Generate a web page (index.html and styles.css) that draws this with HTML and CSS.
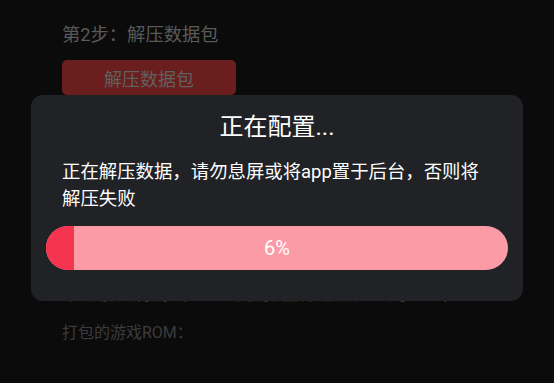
FILE: index.html
```html
<!DOCTYPE html>
<html lang="zh-CN">
  <head>
    <meta charset="UTF-8" />
    <meta name="viewport" content="width=device-width, initial-scale=1.0" />
    <title>打包</title>
    <link rel="stylesheet" href="styles.css">
  </head>
  <body>
    <main class="page">
      <p class="step">第2步：解压数据包</p>
      <button class="stepBtn">解压数据包</button>
      <p class="hint">本功能会将游戏ROM与模拟器打包成独立的APP，打包后可直接安装</p>
      <p class="label">打包的游戏ROM：</p>
    </main>

    <div class="dialog">
      <h1>正在配置...</h1>
      <p class="msg">正在解压数据，请勿息屏或将app置于后台，否则将解压失败</p>
      <div class="bar">
        <div class="fill" style="width: 6%"></div>
        <span class="percent">6%</span>
      </div>
    </div>
  </body>
</html>
```

FILE: styles.css
```css
* {
  margin: 0;
  padding: 0;
  box-sizing: border-box;
  font-family: Roboto, "Noto Sans CJK SC", sans-serif;
}

body {
  background-color: #0b0b0b;
  width: 554px;
  height: 383px;
  overflow: hidden;
  position: relative;
}

.page {
  padding: 22px 0 0 62px;
  display: flex;
  flex-direction: column;
  align-items: flex-start;
}

.step {
  font-size: 18.3px;
  line-height: 26px;
  color: #5a5a5a;
}

.stepBtn {
  margin-top: 12px;
  width: 174px;
  height: 35px;
  border: none;
  border-radius: 5px;
  background-color: #6a1e1d;
  color: #606060;
  font-size: 18px;
}

.hint {
  margin-top: 186px;
  width: 400px;
  white-space: nowrap;
  overflow: hidden;
  font-size: 18px;
  line-height: 26px;
  color: #3d3b26;
}

.label {
  margin-top: 14px;
  font-size: 16px;
  line-height: 24px;
  color: #3c3c3c;
}

.dialog {
  position: absolute;
  left: 31px;
  top: 95px;
  width: 492px;
  height: 206px;
  padding: 17px 15px 0;
  background-color: #202226;
  border-radius: 12px;
}

h1 {
  font-size: 24px;
  font-weight: normal;
  line-height: 31px;
  text-align: center;
  color: #fff;
}

.msg {
  margin-top: 15px;
  padding: 0 16px;
  max-width: 455px;
  font-size: 18.4px;
  line-height: 27px;
  color: #fff;
}

.bar {
  position: relative;
  margin-top: 14px;
  height: 44px;
  border-radius: 22px;
  background-color: #fb9ba6;
  overflow: hidden;
  display: flex;
  align-items: center;
  justify-content: center;
}

.fill {
  position: absolute;
  left: 0;
  top: 0;
  bottom: 0;
  background-color: #f5344f;
}

.percent {
  position: relative;
  font-size: 20px;
  color: #fff;
}
```
